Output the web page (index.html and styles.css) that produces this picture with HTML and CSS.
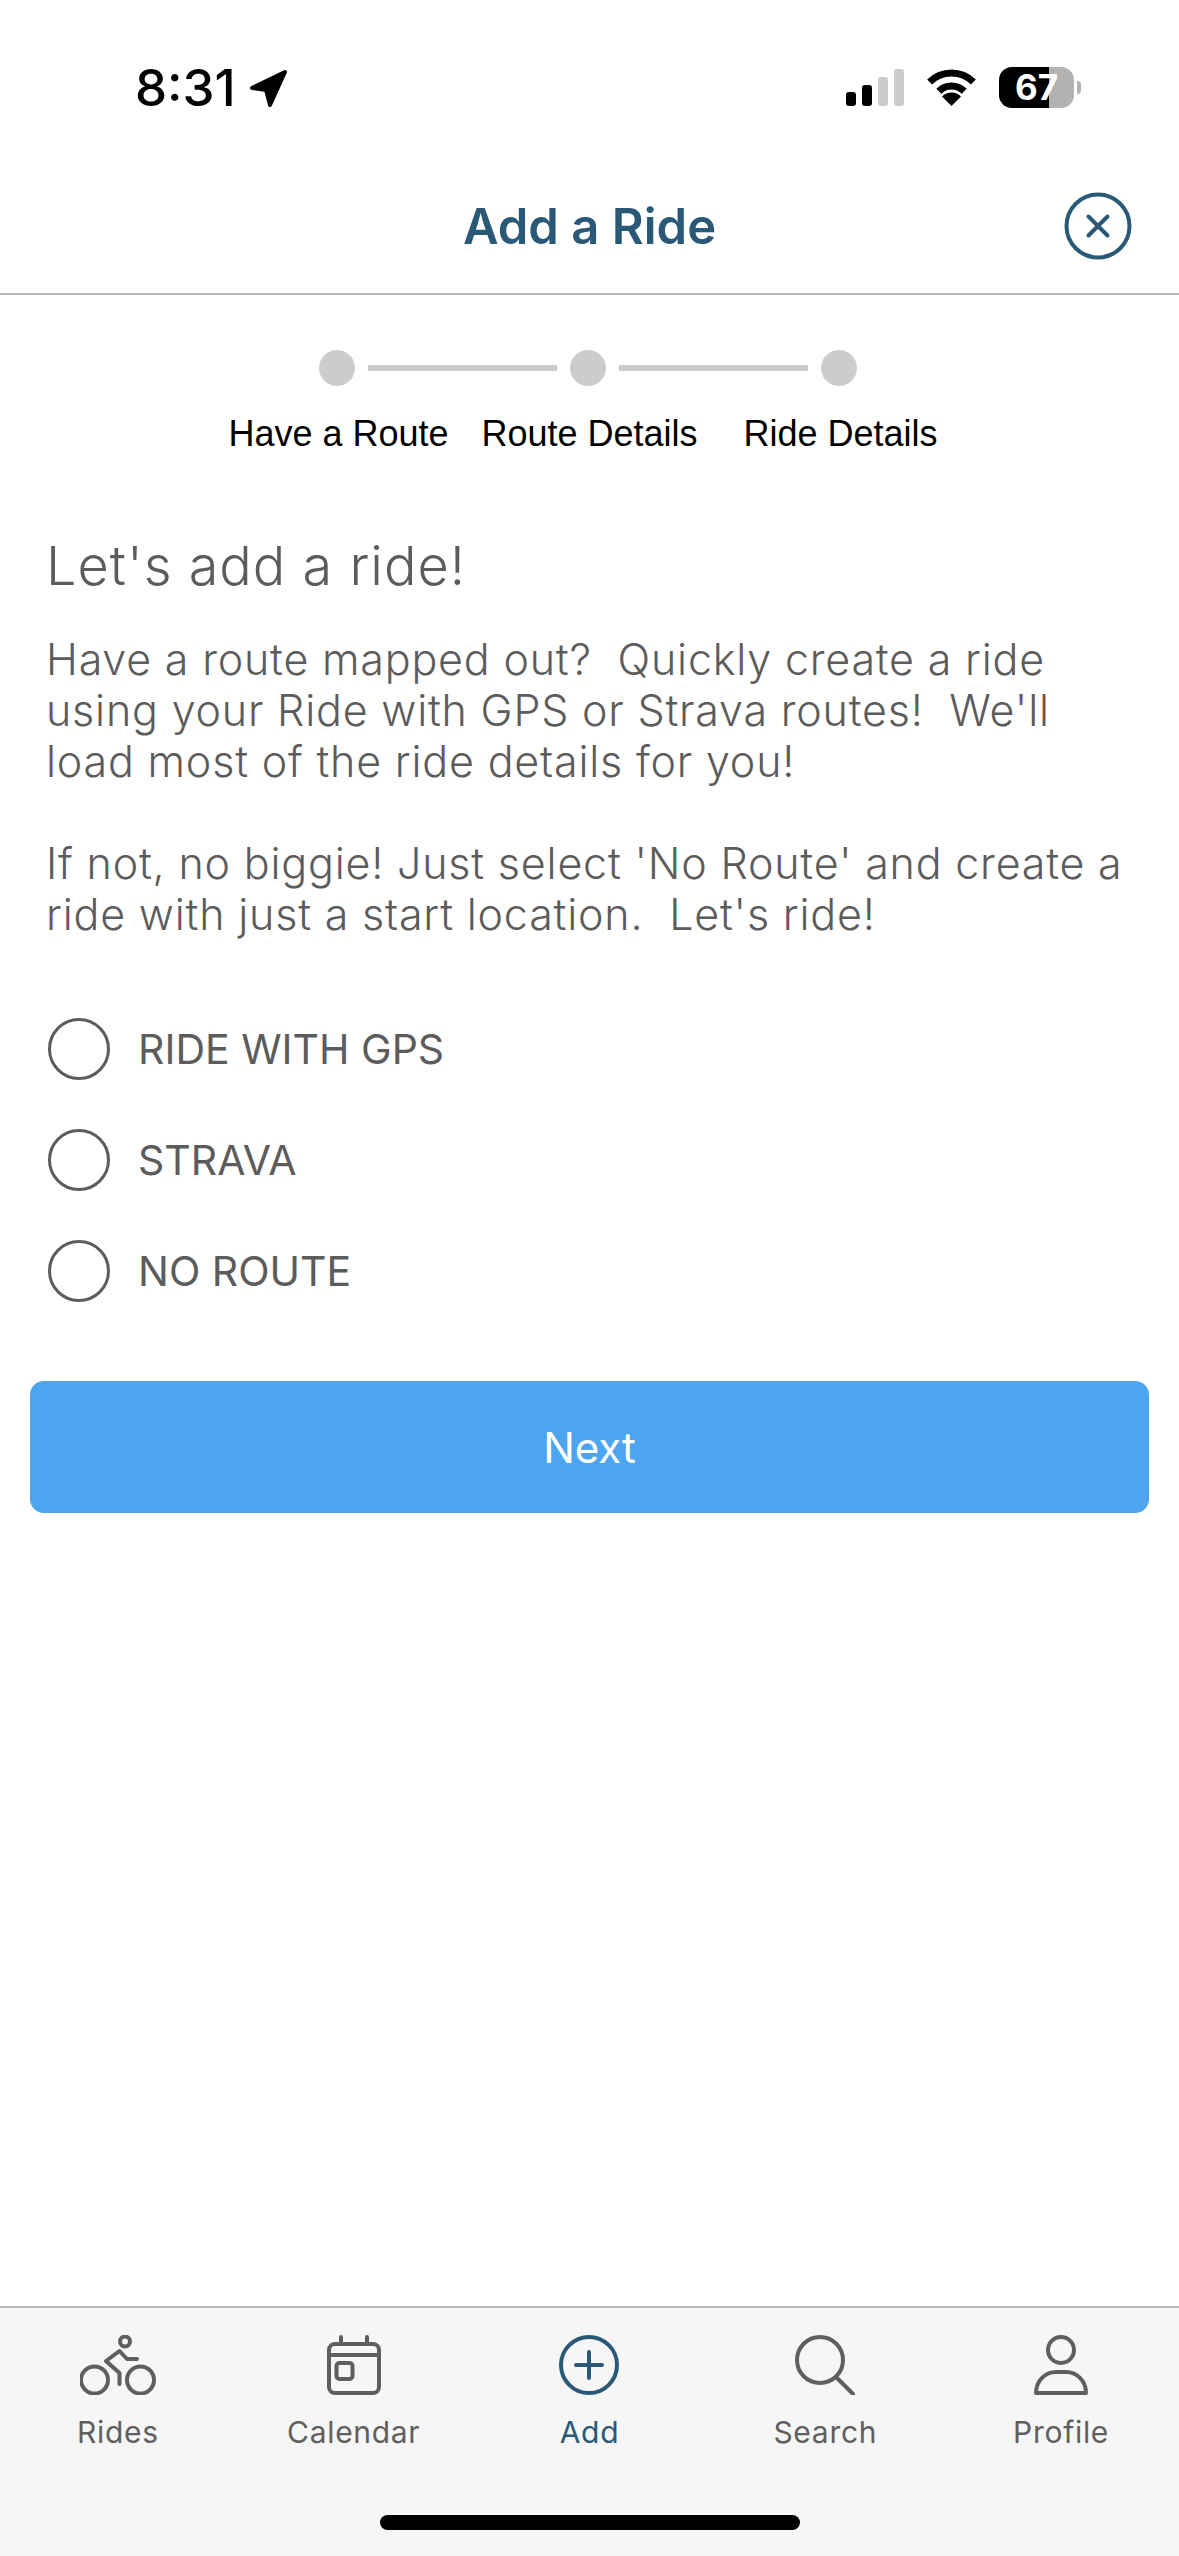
FILE: index.html
```html
<!DOCTYPE html>
<html lang="en">
<head>
    <meta charset="UTF-8">
    <meta name="viewport" content="width=device-width, initial-scale=1.0">
    <title>Add a Ride</title>
    <link rel="stylesheet" href="styles.css">
</head>
<body>
    <div class="status-bar">
        <div class="status-left">
            <span class="time">8:31</span>
            <svg class="arrow" width="39" height="38" viewBox="0 0 39 38">
                <path d="M36 3 3 19 17 21 21 36Z" fill="#000" stroke="#000" stroke-width="4" stroke-linejoin="round"/>
            </svg>
        </div>
        <div class="status-right">
            <div class="signal">
                <span class="bar bar-1"></span>
                <span class="bar bar-2"></span>
                <span class="bar bar-3"></span>
                <span class="bar bar-4"></span>
            </div>
            <svg class="wifi" width="51" height="37" viewBox="0 0 51 37">
                <path d="M3.6 13.1A31 31 0 0 1 47.4 13.1" fill="none" stroke="#000" stroke-width="7"/>
                <path d="M12.8 22.3A18 18 0 0 1 38.2 22.3" fill="none" stroke="#000" stroke-width="7"/>
                <path d="M25.5 37 16 27.5A13.5 13.5 0 0 1 35 27.5Z" fill="#000"/>
            </svg>
            <div class="battery">
                <div class="battery-body">67</div>
                <div class="battery-tip"></div>
            </div>
        </div>
    </div>

    <header class="top-bar">
        <h1>Add a Ride</h1>
        <button class="close-btn" aria-label="Close">
            <svg width="68" height="68" viewBox="0 0 68 68" fill="none" stroke="#2a5978" stroke-width="4" stroke-linecap="round">
                <circle cx="34" cy="34" r="31.5"/>
                <path d="M24.5 24.5 43.5 43.5M43.5 24.5 24.5 43.5"/>
            </svg>
        </button>
    </header>

    <main class="content">
        <section class="stepper">
            <div class="step-track">
                <span class="step-dot"></span>
                <span class="step-line"></span>
                <span class="step-dot"></span>
                <span class="step-line"></span>
                <span class="step-dot"></span>
            </div>
            <div class="step-labels">
                <span>Have a Route</span>
                <span>Route Details</span>
                <span>Ride Details</span>
            </div>
        </section>

        <section class="intro">
            <h2>Let's add a ride!</h2>
            <p>Have a route mapped out?&nbsp; Quickly create a ride<br>using your Ride with GPS or Strava routes!&nbsp; We'll<br>load most of the ride details for you!</p>
            <p class="intro-second">If not, no biggie! Just select 'No Route' and create a<br>ride with just a start location.&nbsp; Let's ride!</p>
        </section>

        <section class="options">
            <label class="option"><span class="radio"></span>RIDE WITH GPS</label>
            <label class="option"><span class="radio"></span>STRAVA</label>
            <label class="option"><span class="radio"></span>NO ROUTE</label>
        </section>

        <button class="next-btn">Next</button>
    </main>

    <nav class="tab-bar">
        <div class="tabs">
            <a class="tab">
                <svg width="76" height="60" viewBox="0 0 76 60" fill="none" stroke="#5f5f5f" stroke-width="4" stroke-linecap="round" stroke-linejoin="round">
                    <circle cx="14.5" cy="45" r="13.5"/>
                    <circle cx="60.500" cy="45" r="13.5"/>
                    <circle cx="45" cy="6.5" r="5"/>
                    <path d="M57 24H47L39.5 16 26 26 39.5 38V49"/>
                </svg>
                <span>Rides</span>
            </a>
            <a class="tab">
                <svg width="54" height="60" viewBox="0 0 54 60" fill="none" stroke="#5f5f5f" stroke-width="4" stroke-linecap="round" stroke-linejoin="round">
                    <rect x="2" y="9" width="50" height="49" rx="6"/>
                    <path d="M2 20H52M14 2V9M40 2V9"/>
                    <rect x="9.5" y="28" width="16" height="16" rx="3"/>
                </svg>
                <span>Calendar</span>
            </a>
            <a class="tab tab-active">
                <svg width="60" height="60" viewBox="0 0 60 60" fill="none" stroke="#2a5978" stroke-width="4" stroke-linecap="round">
                    <circle cx="30" cy="30" r="28"/>
                    <path d="M30 17V43M17 30H43"/>
                </svg>
                <span>Add</span>
            </a>
            <a class="tab">
                <svg width="60" height="60" viewBox="0 0 60 60" fill="none" stroke="#5f5f5f" stroke-width="4" stroke-linecap="round">
                    <circle cx="25" cy="25" r="23"/>
                    <path d="M41 42 58 59"/>
                </svg>
                <span>Search</span>
            </a>
            <a class="tab">
                <svg width="54" height="60" viewBox="0 0 54 60" fill="none" stroke="#5f5f5f" stroke-width="4" stroke-linejoin="round">
                    <circle cx="27" cy="15" r="13"/>
                    <path d="M2 58C2 45 12 37 22 37H32C42 37 52 45 52 58Z"/>
                </svg>
                <span>Profile</span>
            </a>
        </div>
        <div class="home-bar"></div>
    </nav>
</body>
</html>
```

FILE: styles.css
```css
* {
    box-sizing: border-box;
}

body {
    margin: 0;
    height: 2556px;
    display: flex;
    flex-direction: column;
    background-color: #fff;
    font-family: Inter, "Liberation Sans", sans-serif;
    color: #5c5c5c;
    overflow: hidden;
}

/* status bar */
.status-bar {
    height: 162px;
    flex: none;
    display: flex;
    justify-content: space-between;
    align-items: flex-start;
    padding: 67px 98px 0 135px;
}

.status-left {
    display: flex;
    align-items: center;
    height: 41px;
    gap: 13px;
}

.time {
    font-size: 51px;
    font-weight: 500;
    line-height: 41px;
    color: #000;
}

.status-right {
    display: flex;
    align-items: center;
    height: 41px;
    gap: 22px;
}

.signal {
    display: flex;
    align-items: flex-end;
    gap: 6px;
    height: 37px;
}

.bar {
    width: 10px;
    border-radius: 3px;
    background-color: #000;
}

.bar-1 { height: 14px; }
.bar-2 { height: 21px; }
.bar-3 { height: 29px; background-color: #ccc; }
.bar-4 { height: 37px; background-color: #ccc; }

.battery {
    display: flex;
    align-items: center;
    gap: 3px;
}

.battery-body {
    width: 75px;
    height: 41px;
    border-radius: 13px;
    background: linear-gradient(90deg, #000 50px, #b2b2b2 50px);
    color: #fff;
    font-size: 35px;
    font-weight: 700;
    line-height: 41px;
    text-align: center;
}

.battery-tip {
    width: 4px;
    height: 13px;
    border-radius: 0 4px 4px 0;
    background-color: #b2b2b2;
}

/* header */
.top-bar {
    position: relative;
    height: 133px;
    flex: none;
    display: flex;
    align-items: center;
    justify-content: center;
    padding-bottom: 2px;
    border-bottom: 2px solid #b8b8b8;
}

.top-bar h1 {
    margin: 0;
    font-size: 49px;
    font-weight: 600;
    color: #2a5978;
}

.close-btn {
    position: absolute;
    right: 47px;
    top: 30px;
    padding: 0;
    border: none;
    background: none;
    line-height: 0;
}

.content {
    flex: 1;
    display: flex;
    flex-direction: column;
}

/* stepper */
.stepper {
    padding-top: 55px;
}

.step-track {
    display: flex;
    justify-content: center;
    align-items: center;
    gap: 13px;
    height: 36px;
    padding-right: 4px;
}

.step-dot {
    width: 36px;
    height: 36px;
    border-radius: 50%;
    background-color: #ccc;
}

.step-line {
    width: 189px;
    height: 6px;
    background-color: #ccc;
}

.step-labels {
    display: flex;
    justify-content: center;
    margin-top: 27px;
    font-family: "Liberation Sans", Arial, sans-serif;
    font-size: 36px;
    line-height: 42px;
    color: #000;
}

.step-labels span {
    width: 251px;
    text-align: center;
    white-space: nowrap;
}

/* intro text */
.intro {
    margin-top: 79px;
    padding: 0 46px;
    font-weight: 300;
}

.intro h2 {
    margin: 0;
    font-size: 54px;
    font-weight: 300;
    line-height: 64px;
    letter-spacing: 1px;
}

.intro p {
    margin: 36px 0 0;
    font-size: 43px;
    line-height: 51px;
    letter-spacing: 0.8px;
    white-space: nowrap;
}

.intro .intro-second {
    margin-top: 51px;
}

/* route options */
.options {
    margin-top: 78px;
    padding-left: 48px;
    display: flex;
    flex-direction: column;
    gap: 49px;
}

.option {
    display: flex;
    align-items: center;
    gap: 28px;
    height: 62px;
    font-size: 41px;
}

.radio {
    width: 62px;
    height: 62px;
    border: 3px solid #5c5c5c;
    border-radius: 50%;
}

.next-btn {
    margin: 79px 30px 0;
    height: 132px;
    border: none;
    border-radius: 14px;
    background-color: #4ca5ee;
    color: #fff;
    font-family: Inter, "Liberation Sans", sans-serif;
    font-size: 42px;
}

/* tab bar */
.tab-bar {
    height: 250px;
    flex: none;
    border-top: 2px solid #b8b8b8;
    background-color: #f6f6f6;
}

.tabs {
    display: flex;
    padding-top: 27px;
}

.tab {
    flex: 1;
    display: flex;
    flex-direction: column;
    align-items: center;
    gap: 19px;
    font-size: 30px;
    line-height: 36px;
    letter-spacing: 0.7px;
    color: #5f5f5f;
}

.tab-active {
    color: #2a5978;
}

.home-bar {
    width: 420px;
    height: 15px;
    margin: 65px auto 0;
    border-radius: 8px;
    background-color: #000;
}
```
